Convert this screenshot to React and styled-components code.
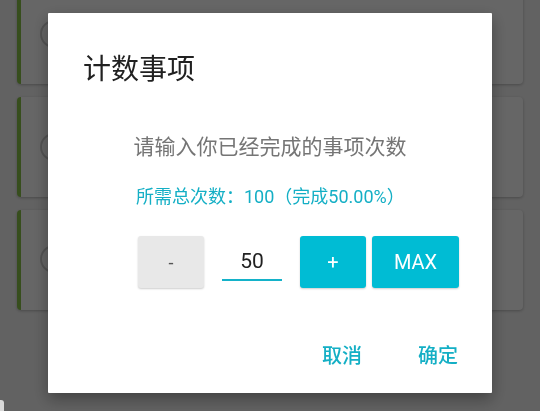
import React, {useState} from 'react';
import styled, {createGlobalStyle} from 'styled-components';

const GlobalStyle = createGlobalStyle`
    html, body {
        margin: 0;
        padding: 0;
        width: 540px;
        height: 411px;
        overflow: hidden;
        background: #f5f5f5;
        font-family: Roboto, "Noto Sans CJK SC", sans-serif;
    }
`

const Page = styled.div`
    display: flex;
    flex-direction: column;
    gap: 13px;
    padding: 0 17px;
    margin-top: -16px;
`

const Card = styled.div`
    display: flex;
    align-items: center;
    height: 100px;
    box-sizing: border-box;
    padding-left: 19px;
    background: #fff;
    border-left: 4px solid #8bc34a;
    border-radius: 4px;
    box-shadow: 0 1px 3px rgba(0, 0, 0, 0.25);
    .check{
        width: 28px;
        height: 28px;
        box-sizing: border-box;
        border: 2px solid #cfcfcf;
        border-radius: 50%;
        margin-top: ${props => props.shift || 0}px;
    }
`

const Overlay = styled.div`
    position: fixed;
    inset: 0;
    display: flex;
    align-items: center;
    justify-content: center;
    padding-bottom: 5px;
    background: rgba(0, 0, 0, 0.6);
`

const Handle = styled.div`
    position: absolute;
    left: 0;
    bottom: 0;
    width: 4px;
    height: 11px;
    background: #d8d8d8;
    border-top-right-radius: 3px;
`

const Dialog = styled.div`
    display: flex;
    flex-direction: column;
    width: 444px;
    box-sizing: border-box;
    padding: 39px 0 21px;
    background: #fff;
    border-radius: 1px;
    box-shadow: 0 6px 16px rgba(0, 0, 0, 0.35);
`

const Title = styled.h2`
    margin: 0 0 0 35px;
    font-size: 28px;
    line-height: 36px;
    font-weight: 400;
    color: #212121;
`

const Message = styled.p`
    margin: 45px 0 0;
    text-align: center;
    font-size: 21px;
    line-height: 28px;
    color: #757575;
`

const Info = styled.p`
    margin: 24px 0 0 88px;
    font-size: 18px;
    line-height: 24px;
    color: #14afc5;
`

const Stepper = styled.div`
    display: flex;
    align-items: flex-start;
    margin: 27px 0 0 90px;
    height: 52px;
`

const StepButton = styled.button`
    width: ${props => props.wide ? 87 : 66}px;
    height: 52px;
    margin-left: ${props => props.gap || 0}px;
    border: none;
    border-radius: 3px;
    font-family: Roboto, "Noto Sans CJK SC", sans-serif;
    font-size: ${props => props.light ? 18 : 20}px;
    background: ${props => props.light ? '#e8e8e8' : '#00bcd4'};
    color: ${props => props.light ? '#555' : '#fff'};
    box-shadow: 0 1px 2px rgba(0, 0, 0, 0.2);
    padding: 0;
`

const CountInput = styled.input`
    width: 60px;
    height: 39px;
    margin: 6px 0 0 18px;
    box-sizing: border-box;
    padding: 0;
    border: none;
    border-bottom: 2px solid #14b2c9;
    outline: none;
    text-align: center;
    font-family: Roboto, sans-serif;
    font-size: 21px;
    color: #212121;
    background: transparent;
`

const Footer = styled.div`
    display: flex;
    justify-content: flex-end;
    gap: 32px;
    margin-top: 52px;
    padding-right: 22px;
`

const TextButton = styled.button`
    border: none;
    background: none;
    padding: 2px 12px;
    font-family: Roboto, "Noto Sans CJK SC", sans-serif;
    font-size: 20px;
    line-height: 28px;
    font-weight: 500;
    color: #14afc5;
`

export default function App() {
    const total = 100;
    const [count, setCount] = useState(50);
    const percent = (count / total * 100).toFixed(2);

    return (
        <>
            <GlobalStyle />
            <Page>
                <Card shift={-1}><div className='check' /></Card>
                <Card shift={0}><div className='check' /></Card>
                <Card shift={-2}><div className='check' /></Card>
            </Page>
            <Overlay>
                <Dialog>
                    <Title>计数事项</Title>
                    <Message>请输入你已经完成的事项次数</Message>
                    <Info>所需总次数：{total}（完成{percent}%）</Info>
                    <Stepper>
                        <StepButton light onClick={() => setCount(Math.max(0, count - 1))}>-</StepButton>
                        <CountInput
                            value={count}
                            onChange={e => setCount(Number(e.target.value) || 0)}
                        />
                        <StepButton gap={18} onClick={() => setCount(Math.min(total, count + 1))}>+</StepButton>
                        <StepButton gap={6} wide onClick={() => setCount(total)}>MAX</StepButton>
                    </Stepper>
                    <Footer>
                        <TextButton>取消</TextButton>
                        <TextButton>确定</TextButton>
                    </Footer>
                </Dialog>
                <Handle />
            </Overlay>
        </>
    );
}
